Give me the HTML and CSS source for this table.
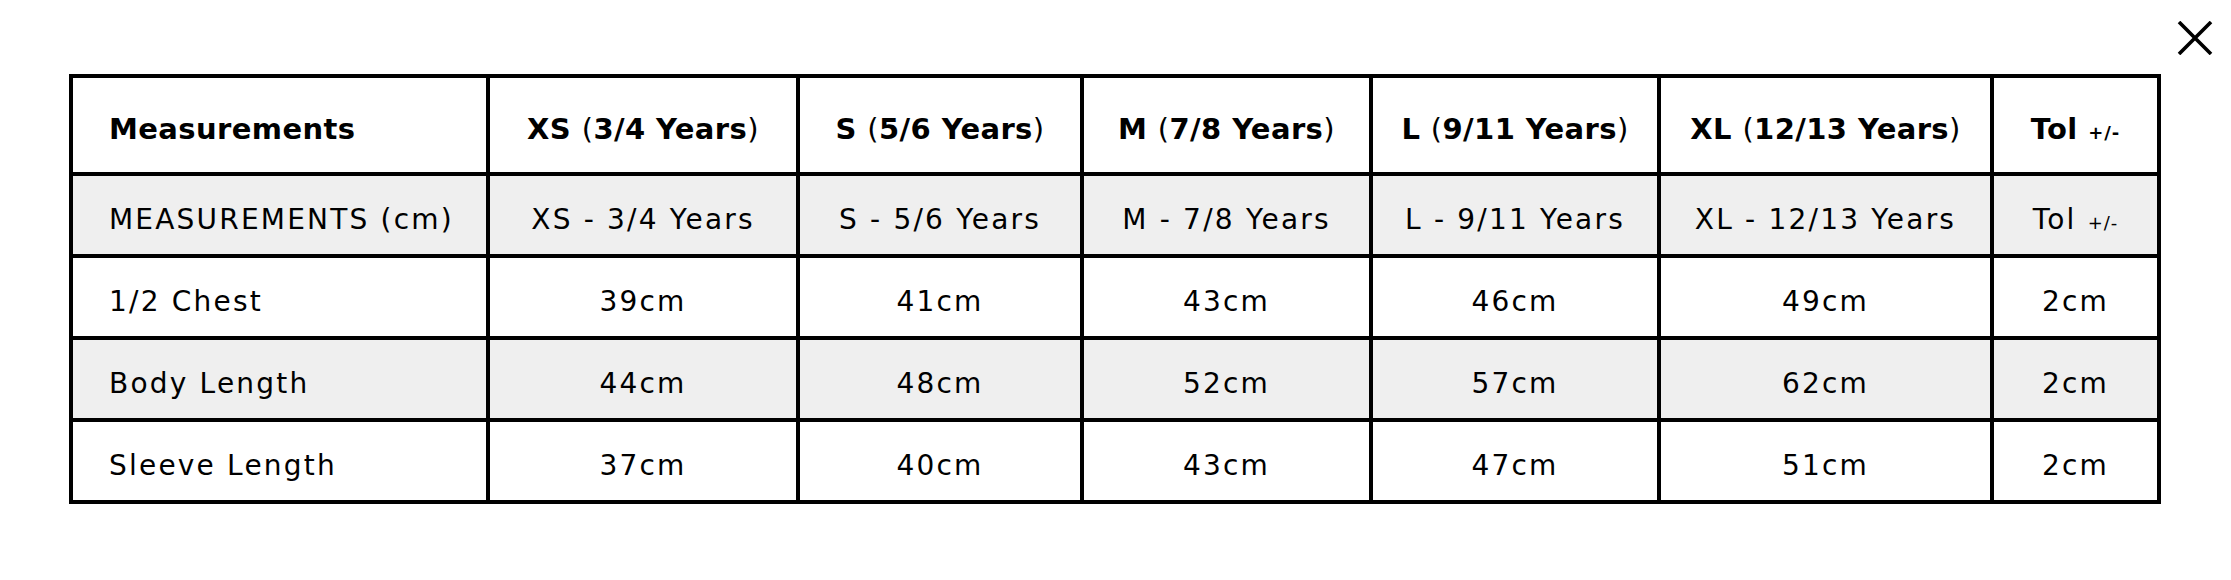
FILE: index.html
```html
<!DOCTYPE html>
<html lang="en">
<head>
<meta charset="utf-8">
<title>Size Guide</title>
<link rel="stylesheet" href="styles.css">
</head>
<body>
<div class="modal">
  <button class="close" aria-label="Close">
    <svg viewBox="0 0 36 34" width="36" height="34"><path d="M2 1 L34 33 M34 1 L2 33" stroke="#000" stroke-width="3.6" fill="none"/></svg>
  </button>
  <table class="size-table">
    <colgroup>
      <col class="c1"><col class="c2"><col class="c3"><col class="c4"><col class="c5"><col class="c6"><col class="c7">
    </colgroup>
    <thead>
      <tr>
        <th class="first">Measurements</th>
        <th>XS <span class="paren">(</span>3/4 Years<span class="paren">)</span></th>
        <th>S <span class="paren">(</span>5/6 Years<span class="paren">)</span></th>
        <th>M <span class="paren">(</span>7/8 Years<span class="paren">)</span></th>
        <th>L <span class="paren">(</span>9/11 Years<span class="paren">)</span></th>
        <th>XL <span class="paren">(</span>12/13 Years<span class="paren">)</span></th>
        <th>Tol <span class="small">+/-</span></th>
      </tr>
    </thead>
    <tbody>
      <tr class="shade">
        <td class="first">MEASUREMENTS (cm)</td>
        <td>XS - 3/4 Years</td>
        <td>S - 5/6 Years</td>
        <td>M - 7/8 Years</td>
        <td>L - 9/11 Years</td>
        <td>XL - 12/13 Years</td>
        <td>Tol <span class="small">+/-</span></td>
      </tr>
      <tr>
        <td class="first">1/2 Chest</td>
        <td>39cm</td><td>41cm</td><td>43cm</td><td>46cm</td><td>49cm</td><td>2cm</td>
      </tr>
      <tr class="shade">
        <td class="first">Body Length</td>
        <td>44cm</td><td>48cm</td><td>52cm</td><td>57cm</td><td>62cm</td><td>2cm</td>
      </tr>
      <tr>
        <td class="first">Sleeve Length</td>
        <td>37cm</td><td>40cm</td><td>43cm</td><td>47cm</td><td>51cm</td><td>2cm</td>
      </tr>
    </tbody>
  </table>
</div>
</body>
</html>
```
FILE: styles.css
```css
* { box-sizing: border-box; }
html, body {
  margin: 0;
  padding: 0;
  background: #fff;
}
body {
  font-family: "DejaVu Sans", "Liberation Sans", sans-serif;
  color: #000;
}
.modal {
  position: relative;
  padding: 74px 0 0 69px;
}
.close {
  position: absolute;
  top: 21px;
  left: 2177px;
  width: 36px;
  height: 34px;
  padding: 0;
  border: 0;
  background: none;
  display: flex;
}
.size-table {
  border-collapse: collapse;
  table-layout: fixed;
  width: 2092px;
  border: 4px solid #000;
}
.c1 { width: 417px; }
.c2 { width: 310px; }
.c3 { width: 284px; }
.c4 { width: 289px; }
.c5 { width: 288px; }
.c6 { width: 333px; }
.c7 { width: 167px; }
.size-table th,
.size-table td {
  border: 4px solid #000;
  text-align: center;
  white-space: nowrap;
  padding: 8px 0 0;
}
.size-table th {
  height: 98px;
  font-weight: bold;
  font-size: 29px;
  letter-spacing: 0.4px;
}
.size-table td {
  height: 82px;
  font-size: 28px;
  letter-spacing: 2.2px;
}
.size-table .first {
  text-align: left;
  padding-left: 36px;
}
.shade td { background: #efefef; }
.paren { font-weight: normal; }
.small { font-size: 18px; font-weight: normal; letter-spacing: 1px; }
th .small { font-weight: bold; }
```
